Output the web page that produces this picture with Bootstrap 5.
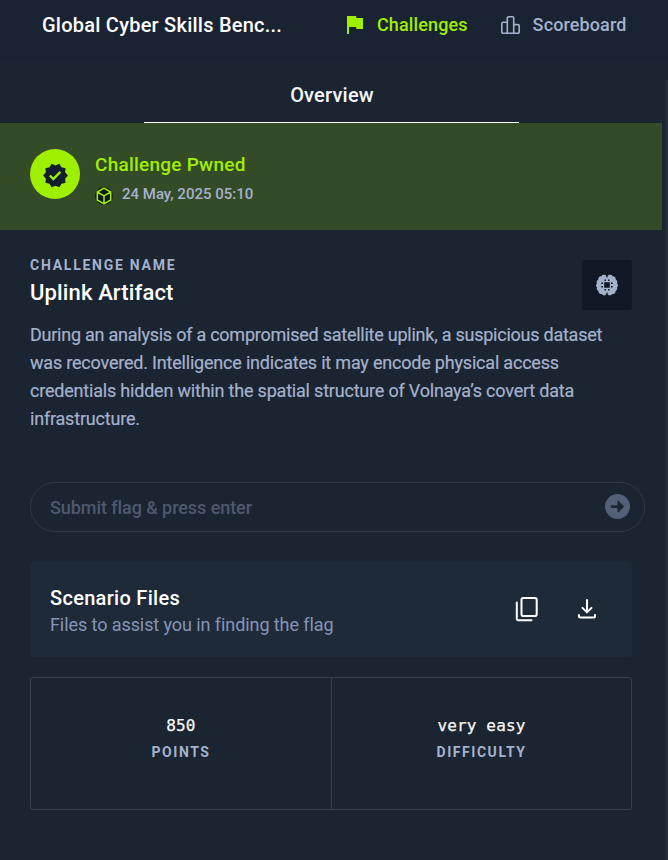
<!DOCTYPE html>
<html lang="en">
<head>
<meta charset="utf-8">
<meta name="viewport" content="width=device-width, initial-scale=1">
<title>Uplink Artifact</title>
<link href="https://cdn.jsdelivr.net/npm/bootstrap@5.3.0/dist/css/bootstrap.min.css" rel="stylesheet">
<style>
  body { background: #1b2431; color: #fff; font-family: Roboto, "Liberation Sans", sans-serif; font-size: 18px; width: 668px; height: 860px; overflow: hidden; }
  svg { display: block; flex: none; }
  .muted { color: #a4b1cd; }
  .lime { color: #9fef00; }
  .topbar { height: 60px; padding: 0 40px 10px 42px; background: #1a2332; font-weight: 500; letter-spacing: .12px; }
  .topbar a { white-space: nowrap; }
  .topbar a span { padding-bottom: 2px; }
  .link-challenges { margin-left: 43px; gap: 14px; }
  .link-scoreboard { margin-left: 33px; gap: 13px; }
  .event-name { font-size: 20px; line-height: 24px; width: 262px; letter-spacing: .24px; }
  .page-pane { width: 662px; }
  .rail { width: 3px; height: 780px; margin-top: 20px; background: #232d3b; }
  .tab-row { height: 63px; }
  .tab-item { width: 375px; border-bottom: 1px solid #fff; font-size: 20px; font-weight: 500; color: #f3f5f9; line-height: 24px; padding: 23px 0 0 2px; letter-spacing: .2px; }
  .pwned { height: 107px; background: #344b28; padding: 26px 30px; gap: 15px; }
  .seal { width: 50px; height: 50px; background: #9fef00; padding-top: 2px; }
  .pwned-title { font-size: 19px; line-height: 24px; font-weight: 500; margin-top: 4px; letter-spacing: .24px; }
  .pwned-date { font-size: 15px; line-height: 20px; margin-top: 7px; gap: 9px; }
  .pwned-date svg { margin-top: 3px; }
  .main-area { padding: 0 30px; }
  .eyebrow { font-size: 14px; line-height: 16px; font-weight: 700; letter-spacing: 1.75px; }
  .title { font-size: 22px; line-height: 28px; font-weight: 500; margin-top: 6px; letter-spacing: .14px; }
  .category { width: 50px; height: 50px; background: #111825; border-radius: 3px; margin-top: 3px; }
  .intro { height: 64px; margin-top: 27px; }
  .desc { font-size: 18px; line-height: 28px; height: 112px; letter-spacing: -.2px; -webkit-text-stroke: .2px #a4b1cd; white-space: nowrap; }
  .desc div:first-child { letter-spacing: -.243px; }
  .flag-box { width: 615px; height: 50px; border: 1px solid #2f394a; border-radius: 25px; margin-top: 49px; padding: 0 13px 0 19px; color: #4e596d; font-weight: 500; letter-spacing: -.07px; }
  .files { height: 95px; margin-top: 30px; background: #1f2a38; border-radius: 4px; padding: 0 34px 0 20px; }
  .files-text { padding-top: 5px; }
  .files-title { font-size: 20px; line-height: 26px; font-weight: 500; letter-spacing: .3px; }
  .files-sub { line-height: 28px; color: #8494b8; letter-spacing: -.08px; }
  .files-actions { gap: 38px; padding: 0 1px 2px 0; }
  .stats { height: 133px; margin-top: 20px; border: 1px solid #364050; border-radius: 3px; }
  .stats > div + div { border-left: 1px solid #364050; }
  .stat-value { font-family: "DejaVu Sans Mono", monospace; font-size: 16px; line-height: 24px; margin-top: 36px; color: #f7f7f5; letter-spacing: .12px; -webkit-text-stroke: .25px #f7f7f5; }
  .stat-label { font-size: 14px; line-height: 16px; font-weight: 700; letter-spacing: 1.55px; margin-top: 6px; }
</style>
</head>
<body>
<header class="topbar d-flex align-items-center">
  <div class="event-name">Global Cyber Skills Benc...</div>
  <a class="link-challenges d-flex align-items-center lime text-decoration-none" href="#">
    <svg width="16" height="18" viewBox="0 0 16 18"><path fill="#9fef00" d="M0 0h9l.5 2H16v11H9.500L9 11H2v7H0z"/></svg>
    <span>Challenges</span>
  </a>
  <a class="link-scoreboard d-flex align-items-center muted text-decoration-none" href="#">
    <svg width="19" height="18" viewBox="0 0 19 18" fill="none" stroke="#a4b1cd" stroke-width="1.600"><path d="M6.300 17.200V2a1.200 1.200 0 0 1 1.200-1.200h4A1.200 1.200 0 0 1 12.700 2v15.200M6.300 6.300H2A1.200 1.200 0 0 0 .8 7.500V16A1.200 1.200 0 0 0 2 17.200h15a1.200 1.200 0 0 0 1.200-1.200V9.800A1.200 1.200 0 0 0 17 8.600h-4.300"/></svg>
    <span>Scoreboard</span>
  </a>
</header>
<div class="d-flex">
<main class="page-pane">
  <nav class="tab-row d-flex justify-content-center">
    <div class="tab-item text-center">Overview</div>
  </nav>
  <section class="pwned d-flex">
    <div class="seal rounded-circle d-flex align-items-center justify-content-center">
      <svg width="27" height="27" viewBox="0 0 24 24"><path fill="#141d2b" d="m23 12-2.440-2.780.34-3.680-3.610-.82-1.890-3.180L12 3 8.600 1.540 6.710 4.720l-3.610.81.34 3.680L1 12l2.440 2.780-.34 3.690 3.610.82 1.890 3.180L12 21l3.400 1.460 1.890-3.180 3.610-.82-.34-3.680z"/><path d="m7 12 3.100 3.100 6.200-6.300" fill="none" stroke="#9fef00" stroke-width="2.100"/></svg>
    </div>
    <div>
      <div class="pwned-title lime">Challenge Pwned</div>
      <div class="d-flex pwned-date muted fw-medium">
        <svg width="18" height="18" viewBox="0 1 18 18"><circle cx="9" cy="10" r="8.900" fill="#111927"/><path d="M9 2.200 15.700 6v8L9 17.800 2.300 14V6zM2.300 6 9 9.900 15.700 6M9 9.900v7.900" fill="none" stroke="#9fef00" stroke-width="1.500" stroke-linejoin="round"/></svg>
        <span>24 May, 2025 05:10</span>
      </div>
    </div>
  </section>
  <section class="main-area">
    <div class="intro d-flex justify-content-between">
      <div>
        <div class="eyebrow muted">CHALLENGE NAME</div>
        <div class="title">Uplink Artifact</div>
      </div>
      <div class="category d-flex align-items-center justify-content-center">
        <svg width="22" height="22" viewBox="0 0 22 22"><path fill="#a4b1cd" d="M10.400 2.200C9.700.5 6.500.2 5.500 2.200 3.500 2 2 3.700 2.300 5.500.7 6.500.2 8.200 1 9.500c-1.300 1-1.300 2.800 0 3.800-.6 1.700.1 3 1.400 3.700C2.300 19 4 20.300 5.700 20c1.200 1.900 4 1.800 4.700 0l.6-1 .6 1c.7 1.800 3.500 1.900 4.700 0 1.700.3 3.400-1 3.300-3 1.300-.7 2-2 1.400-3.700 1.300-1 1.300-2.800 0-3.800.8-1.300.3-3-1.300-4C20 3.700 18.500 2 16.500 2.200c-1-2-4.200-1.700-4.900 0L11 3.200z"/><path fill="#111825" d="M10.500 0h1v3.500h-1zm0 18.500h1V22h-1zM8.200 8.200h5.600v5.600H8.200zM8.500 5.500H10V7H8.500zm3.500 0h1.500V7H12zM8.500 15H10v1.500H8.500zm3.500 0h1.500v1.500H12zM5.300 8.500H7V10H5.300zm0 3.500H7v1.500H5.300zM15 8.500h1.700V10H15zm0 3.500h1.700v1.500H15z"/></svg>
      </div>
    </div>
    <div class="desc muted">
      <div>During an analysis of a compromised satellite uplink, a suspicious dataset</div>
      <div>was recovered. Intelligence indicates it may encode physical access</div>
      <div>credentials hidden within the spatial structure of Volnaya’s covert data</div>
      <div>infrastructure.</div>
    </div>
    <div class="flag-box d-flex align-items-center justify-content-between">
      <span>Submit flag &amp; press enter</span>
      <svg width="26" height="26" viewBox="0 0 26 26"><circle cx="12.500" cy="12.500" r="12.500" fill="#536078"/><path fill="#1b2431" d="M6.500 11.200h6V7.200a.6.6 0 0 1 1-.4l5.200 5.200a.7.7 0 0 1 0 1l-5.200 5.200a.6.6 0 0 1-1-.4v-3.900h-6a.8.8 0 0 1-.8-.8v-1.100a.8.8 0 0 1 .8-.8z"/></svg>
    </div>
    <div class="files d-flex align-items-center justify-content-between">
      <div class="files-text">
        <div class="files-title">Scenario Files</div>
        <div class="files-sub">Files to assist you in finding the flag</div>
      </div>
      <div class="files-actions d-flex align-items-center">
        <svg width="24" height="26" viewBox="0 0 24 26" fill="none" stroke="#fff" stroke-width="2" stroke-linecap="round"><rect x="6.500" y="2" width="15.200" height="18" rx="1.800"/><path d="M1.800 6.500v16.200a1.500 1.500 0 0 0 1.500 1.500H16.500"/></svg>
        <svg width="20" height="22" viewBox="0 0 20 22" fill="none" stroke="#fff" stroke-width="2" stroke-linecap="round" stroke-linejoin="round"><path d="M10 2v12M5.500 9.900 10 14.400l4.500-4.500M2 17v1a1.500 1.500 0 0 0 1.500 1.500h13A1.500 1.500 0 0 0 18 18v-1"/></svg>
      </div>
    </div>
    <div class="stats d-flex text-center">
      <div class="w-50"><div class="stat-value">850</div><div class="stat-label muted">POINTS</div></div>
      <div class="w-50"><div class="stat-value">very easy</div><div class="stat-label muted">DIFFICULTY</div></div>
    </div>
  </section>
</main>
<div class="rail ms-auto"></div>
</div>
<script src="https://cdn.jsdelivr.net/npm/bootstrap@5.3.0/dist/js/bootstrap.bundle.min.js"></script>
</body>
</html>
